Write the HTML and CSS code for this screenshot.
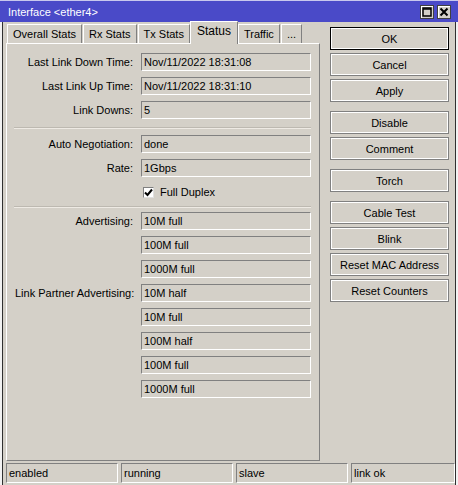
FILE: index.html
```html
<!DOCTYPE html>
<html>
<head>
    <title>Interface &lt;ether4&gt;</title>
    <link rel="stylesheet" href="styles.css">
</head>
<body>
    <div class="window">
        <!-- Title bar -->
        <div class="titlebar">
            <span class="title">Interface &lt;ether4&gt;</span>
            <div class="title-buttons">
                <span class="tbtn">
                    <svg width="10" height="10" viewBox="0 0 10 10"><rect x="1" y="1" width="8" height="8" fill="none" stroke="#000" stroke-width="1.5"/><line x1="1" y1="2" x2="9" y2="2" stroke="#000" stroke-width="1.5"/></svg>
                </span>
                <span class="tbtn">
                    <svg width="10" height="10" viewBox="0 0 10 10"><path d="M1.5 1.5 L8.5 8.5 M8.5 1.5 L1.5 8.5" stroke="#000" stroke-width="2"/></svg>
                </span>
            </div>
        </div>

        <div class="frame">
            <div class="content">
                <!-- Left side: tabs and status page -->
                <div class="left">
                    <div class="tabs">
                        <span class="tab">Overall Stats</span>
                        <span class="tab">Rx Stats</span>
                        <span class="tab">Tx Stats</span>
                        <span class="tab active">Status</span>
                        <span class="tab">Traffic</span>
                        <span class="tab">...</span>
                    </div>
                    <div class="panel">
                        <div class="row"><label>Last Link Down Time:</label><div class="field">Nov/11/2022 18:31:08</div></div>
                        <div class="row"><label>Last Link Up Time:</label><div class="field">Nov/11/2022 18:31:10</div></div>
                        <div class="row"><label>Link Downs:</label><div class="field">5</div></div>

                        <div class="sep"></div>

                        <div class="row"><label>Auto Negotiation:</label><div class="field">done</div></div>
                        <div class="row"><label>Rate:</label><div class="field">1Gbps</div></div>
                        <div class="row">
                            <label></label>
                            <div class="check">
                                <span class="box">
                                    <svg width="9" height="9" viewBox="0 0 9 9"><path d="M1 4.5 L3.5 7 L8 1.5" fill="none" stroke="#000" stroke-width="2"/></svg>
                                </span>
                                Full Duplex
                            </div>
                        </div>

                        <div class="sep sep-tight"></div>

                        <div class="row"><label>Advertising:</label><div class="field">10M full</div></div>
                        <div class="row"><label></label><div class="field">100M full</div></div>
                        <div class="row"><label></label><div class="field">1000M full</div></div>
                        <div class="row"><label>Link Partner Advertising:</label><div class="field">10M half</div></div>
                        <div class="row"><label></label><div class="field">10M full</div></div>
                        <div class="row"><label></label><div class="field">100M half</div></div>
                        <div class="row"><label></label><div class="field">100M full</div></div>
                        <div class="row"><label></label><div class="field">1000M full</div></div>
                    </div>
                </div>

                <!-- Right side: action buttons -->
                <div class="buttons">
                    <button class="btn default">OK</button>
                    <button class="btn">Cancel</button>
                    <button class="btn">Apply</button>
                    <button class="btn group">Disable</button>
                    <button class="btn">Comment</button>
                    <button class="btn group">Torch</button>
                    <button class="btn group">Cable Test</button>
                    <button class="btn">Blink</button>
                    <button class="btn">Reset MAC Address</button>
                    <button class="btn">Reset Counters</button>
                </div>
            </div>

            <!-- Status bar -->
            <div class="statusbar">
                <div class="status">enabled</div>
                <div class="status">running</div>
                <div class="status">slave</div>
                <div class="status">link ok</div>
            </div>
        </div>
    </div>
</body>
</html>
```

FILE: styles.css
```css
body {
    margin: 0;
    background: #f2f2f2;
    font-family: "Liberation Sans", Arial, sans-serif;
    font-size: 11px;
    color: #000;
}

.window {
    width: 458px;
    height: 485px;
    display: flex;
    flex-direction: column;
}

/* Title bar */
.titlebar {
    height: 21px;
    border-top: 1px solid #c8c8ee;
    background-color: #4a4ac8;
    color: #fff;
    display: flex;
    align-items: center;
    justify-content: space-between;
    padding: 0 7px 0 8px;
}

.title {
    font-size: 11px;
}

.title-buttons {
    display: flex;
    gap: 3px;
}

.tbtn {
    width: 12px;
    height: 12px;
    background: #d4d0c8;
    border: 1px solid #404040;
    box-shadow: inset 1px 1px 0 #fff;
    display: flex;
    align-items: center;
    justify-content: center;
}

/* Window body */
.frame {
    flex: 1;
    margin-left: 2px;
    margin-right: 2px;
    border-left: 1px solid #303030;
    border-right: 1px solid #303030;
    background-color: #d4d0c8;
    padding: 0 0 0 3px;
    display: flex;
    flex-direction: column;
}

.content {
    display: flex;
    gap: 10px;
}

.left {
    width: 314px;
}

/* Tabs */
.tabs {
    display: flex;
    align-items: flex-end;
    height: 21px;
    padding-left: 1px;
    position: relative;
    z-index: 1;
}

.tab {
    height: 18px;
    line-height: 18px;
    padding: 0 5px;
    border-top: 1px solid #fff;
    border-left: 1px solid #fff;
    border-right: 1px solid #808080;
    margin-right: 1px;
    white-space: nowrap;
}

.tab.active {
    height: 22px;
    line-height: 18px;
    margin: 0 0 -1px -1px;
    padding: 0 6px;
    background-color: #d4d0c8;
    font-size: 12px;
}

/* Status page */
.panel {
    height: 407px;
    border-top: 1px solid #fff;
    border-left: 1px solid #fff;
    border-right: 1px solid #808080;
    border-bottom: 1px solid #808080;
    padding: 9px 8px 0 8px;
    display: flex;
    flex-direction: column;
    gap: 6px;
}

.row {
    display: flex;
    align-items: center;
    height: 18px;
}

.row label {
    width: 118px;
    text-align: right;
    padding-right: 8px;
    white-space: nowrap;
}

.field {
    width: 166px;
    height: 16px;
    line-height: 16px;
    padding-left: 2px;
    border-top: 1px solid #808080;
    border-left: 1px solid #808080;
    border-right: 1px solid #fff;
    border-bottom: 1px solid #fff;
}

.check {
    display: flex;
    align-items: center;
    gap: 6px;
    padding-left: 2px;
}

.box {
    width: 9px;
    height: 9px;
    background: #fff;
    border-top: 1px solid #808080;
    border-left: 1px solid #808080;
    border-right: 1px solid #e0e0e0;
    border-bottom: 1px solid #e0e0e0;
    display: flex;
    align-items: center;
    justify-content: center;
}

.sep {
    height: 0;
    border-top: 1px solid #bdb9b1;
    border-bottom: 1px solid #eeeae4;
    margin: 2px 0 0 -1px;
}

.sep-tight {
    margin-top: -1px;
    margin-bottom: -2px;
}

/* Buttons */
.buttons {
    width: 119px;
    padding-top: 5px;
    display: flex;
    flex-direction: column;
    gap: 3px;
}

.btn {
    height: 23px;
    background-color: #d4d0c8;
    border: 1px solid #808080;
    box-shadow: inset 1px 1px 0 #fff, inset -1px -1px 0 #fff;
    font-family: "Liberation Sans", Arial, sans-serif;
    font-size: 11px;
    color: #000;
    padding: 0;
}

.btn.default {
    border: 1px solid #000;
}

.btn.group {
    margin-top: 6px;
}

/* Status bar */
.statusbar {
    margin-top: 2px;
    display: flex;
    gap: 3px;
}

.status {
    width: 108px;
    height: 18px;
    line-height: 18px;
    padding-left: 2px;
    border-top: 1px solid #808080;
    border-left: 1px solid #808080;
    border-right: 1px solid #fff;
    border-bottom: 1px solid #fff;
}

.status:last-child {
    flex: 1;
}
```
